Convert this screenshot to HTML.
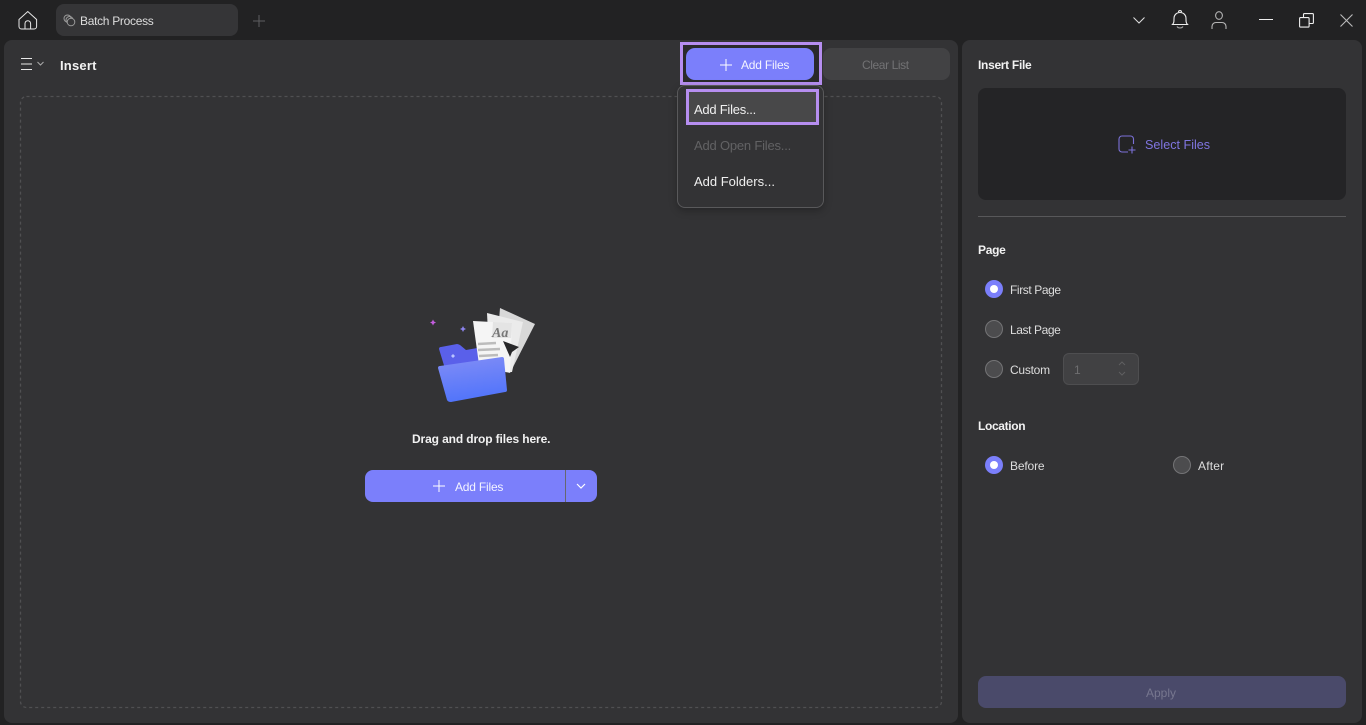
<!DOCTYPE html>
<html>
<head>
<meta charset="utf-8">
<style>
html,body{margin:0;padding:0;width:1366px;height:725px;overflow:hidden;background:#222223;font-family:"Liberation Sans",sans-serif;color:#e8e8e8;font-size:12px}
.a{position:absolute;white-space:nowrap}
.t{position:absolute;white-space:nowrap;line-height:16px}
svg{position:absolute;overflow:visible}
.b{font-weight:bold;color:#f2f2f2}
.radio{position:absolute;width:16px;height:16px;border-radius:50%;background:#4c4c4e;border:1px solid #747476}
.on{position:absolute;width:18px;height:18px;border-radius:50%;background:#7b7ffb}
.on:after{content:"";position:absolute;left:5px;top:5px;width:8px;height:8px;border-radius:50%;background:#fff}
</style>
</head>
<body>
<!-- top bar -->
<svg style="left:17px;top:10px" width="22" height="20" viewBox="0 0 22 20" fill="none" stroke="#e8e8e8" stroke-width="1"><path d="M2 9.500 10.800 1.500 19.600 9.500V16.500a2.500 2.500 0 0 1-2.500 2.500H4.500a2.500 2.500 0 0 1-2.500-2.500Z"/><path d="M8 19V13.500a2.800 2.800 0 0 1 5.600 0V19"/></svg>
<div class="a" style="left:56px;top:4px;width:182px;height:32px;border-radius:8px;background:#353537"></div>
<svg style="left:63px;top:14px" width="14" height="14" viewBox="0 0 14 14" fill="none" stroke="#999" stroke-width="1"><circle cx="4.500" cy="4.500" r="3.500"/><circle cx="6.500" cy="6" r="3.500"/><circle cx="8" cy="8" r="3.800" fill="#353537"/></svg>
<div class="t" style="left:80px;top:13px;color:#ddd;letter-spacing:-.3px">Batch Process</div>
<svg style="left:252px;top:14px" width="14" height="14" stroke="#5e5e60" stroke-width="1"><path d="M7 1V13M1 7H13"/></svg>

<svg style="left:1132px;top:15px" width="14" height="10" fill="none" stroke="#ddd" stroke-width="1"><path d="M1.500 2.500 7 8 12.500 2.500"/></svg>
<svg style="left:1171px;top:9px" width="18" height="21" viewBox="0 0 18 21" fill="none" stroke="#eee" stroke-width="1.100"><path d="M1.500 15.500c1.500-1.500 1.500-3 1.500-6 0-3.500 2.500-6 6-6s6 2.500 6 6c0 3 0 4.500 1.500 6Z"/><path d="M7.500 3.200C7.500 1 10.500 1 10.500 3.200"/><path d="M6 17.500c1.200 2 4.800 2 6 0" stroke="#aaa"/></svg>
<svg style="left:1211px;top:11px" width="16" height="19" viewBox="0 0 16 19" fill="none" stroke="#b4b4b4" stroke-width="1.100"><ellipse cx="8" cy="4.500" rx="3.400" ry="3.800"/><path d="M1 18V15.500C1 13 3 11.500 5 11.500H11C13 11.500 15 13 15 15.500V18"/></svg>
<div class="a" style="left:1259px;top:19px;width:14px;height:1px;background:#eee"></div>
<svg style="left:1299px;top:13px" width="15" height="15" viewBox="0 0 15 15" fill="none" stroke="#eee" stroke-width="1.100"><rect x=".6" y="4.600" width="9.500" height="9.500" rx="1"/><path d="M4.500 4.500V1.600a1 1 0 0 1 1-1H13.400a1 1 0 0 1 1 1V9.500a1 1 0 0 1-1 1H10"/></svg>
<svg style="left:1340px;top:14px" width="13" height="13" stroke="#bbb" stroke-width="1.100"><path d="M.5.500 12.500 12.500M12.500.500 .5 12.500"/></svg>

<!-- left panel -->
<div class="a" style="left:4px;top:40px;width:954px;height:683px;background:#333335;border-radius:8px"></div>
<!-- right panel -->
<div class="a" style="left:962px;top:40px;width:400px;height:683px;background:#333335;border-radius:8px"></div>

<!-- toolbar -->
<svg style="left:20px;top:57px" width="24" height="14" fill="none" stroke="#e8e8e8" stroke-width="1"><path d="M1 1.500H12M1 7H12M1 12.500H12"/><path d="M17.500 5 20.500 8 23.500 5" stroke="#aaa"/></svg>
<div class="t b" style="left:60px;top:57px;font-size:13px;letter-spacing:.2px;top:58px">Insert</div>

<!-- drop zone -->
<svg style="left:20px;top:96px" width="922" height="612" fill="none"><rect x=".5" y=".5" width="921" height="611" rx="6" stroke="#505052" stroke-width="1.300" stroke-dasharray="3 3"/></svg>

<!-- Add files top -->
<div class="a" style="left:680px;top:42px;width:136px;height:37px;border:3px solid #b68ef0;background:#2a2a2c"></div>
<div class="a" style="left:686px;top:48px;width:128px;height:32px;border-radius:9px;background:#7b7ffb"></div>
<svg style="left:720px;top:59px" width="12" height="12" stroke="#fff" stroke-width="1"><path d="M6 0V12M0 6H12"/></svg>
<div class="t" style="left:741px;top:57px;color:#f4f4ff;letter-spacing:-.2px">Add Files</div>
<div class="a" style="left:823px;top:48px;width:127px;height:32px;border-radius:8px;background:#424244"></div>
<div class="t" style="left:862px;top:57px;color:#727274;letter-spacing:-.4px">Clear List</div>

<!-- dropdown -->
<div class="a" style="left:677px;top:85px;width:145px;height:121px;border:1px solid #59595b;border-radius:8px;background:#333335;box-shadow:0 3px 8px rgba(0,0,0,.25)"></div>
<div class="a" style="left:686px;top:89px;width:127px;height:30px;border:3px solid #b68ef0;background:#484849"></div>
<div class="t" style="left:694px;top:102px;font-size:13px;color:#f0f0f0;letter-spacing:-.25px">Add Files...</div>
<div class="t" style="left:694px;top:138px;font-size:13px;color:#626264;letter-spacing:-.2px">Add Open Files...</div>
<div class="t" style="left:694px;top:174px;font-size:13px;color:#f0f0f0">Add Folders...</div>

<!-- illustration -->
<svg style="left:420px;top:300px" width="125" height="110" viewBox="0 0 125 110">
<defs>
<linearGradient id="f" x1="0.300" y1="0" x2=".5" y2="1"><stop offset="0" stop-color="#7f8cf6"/><stop offset="1" stop-color="#4f73fb"/></linearGradient>
</defs>
<path d="M13 19.500 14 21.500 16 22.500 14 23.500 13 25.500 12 23.500 10 22.500 12 21.500Z" fill="#c55de0"/>
<path d="M43 26 44 28 46 29 44 30 43 32 42 30 40 29 42 28Z" fill="#8c83ee"/>
<path d="M19 49Q19 47 21 47L37 44Q38 44 40 45L46 50 63 47 66 75 30 85Z" fill="#5a60ea"/>
<path d="M33 54 35 56 33 58 31 56Z" fill="#b9c4ff"/>
<path d="M80 8 115 24 90 73 75 70Z" fill="#d8d8d8"/>
<path d="M67 13 103 22 92 72 70 72Z" fill="#ebebeb"/>
<path d="M53 21 92 23 90 72 60 72Z" fill="#f5f5f5"/>
<path d="M73 22 92 23 91 38 72 38Z" fill="#e4e4e4"/>
<text x="72" y="37" font-family="Liberation Serif" font-style="italic" font-weight="bold" font-size="14" fill="#777">Aa</text>
<path d="M58 44 76 43M58 50 80 49M59 56 78 55" stroke="#bcbcbc" stroke-width="2.500"/>
<path d="M83 41 99 47 92 52 90 57Z" fill="#28282a"/>
<path d="M18 68Q18 66 20 66L82 57Q84 57 84 59L87 90Q87 92 85 92L31 102Q28 102 27 100Z" fill="url(#f)"/>
</svg>

<div class="t b" style="left:412px;top:431px;letter-spacing:-.12px">Drag and drop files here.</div>

<!-- Add files main -->
<div class="a" style="left:365px;top:470px;width:232px;height:32px;border-radius:8px;background:#7b7ffb"></div>
<div class="a" style="left:565px;top:470px;width:1px;height:32px;background:#66676f"></div>
<svg style="left:433px;top:480px" width="12" height="12" stroke="#fff" stroke-width="1"><path d="M6 0V12M0 6H12"/></svg>
<div class="t" style="left:455px;top:479px;color:#f4f4ff;letter-spacing:-.2px">Add Files</div>
<svg style="left:576px;top:483px" width="10" height="7" fill="none" stroke="#fff" stroke-width="1.200"><path d="M1 1 5 5 9 1"/></svg>

<!-- right panel content -->
<div class="t b" style="left:978px;top:57px;letter-spacing:-.3px">Insert File</div>
<div class="a" style="left:978px;top:88px;width:368px;height:112px;border-radius:8px;background:#242426"></div>
<svg style="left:1118px;top:135px" width="19" height="19" viewBox="0 0 19 19" fill="none" stroke="#7b71d8" stroke-width="1.100"><path d="M15.500 9V4a3 3 0 0 0-3-3H4a3 3 0 0 0-3 3V14a3 3 0 0 0 3 3H10"/><path d="M14 11.500V18.500M10.500 15H17.500"/></svg>
<div class="t" style="left:1145px;top:137px;color:#7f75e0;font-size:12.600px">Select Files</div>
<div class="a" style="left:978px;top:216px;width:368px;height:1px;background:#58585a"></div>

<div class="t b" style="left:978px;top:242px;letter-spacing:-.3px">Page</div>
<div class="on" style="left:985px;top:280px"></div>
<div class="t" style="left:1010px;top:282px;color:#ddd;letter-spacing:-.4px">First Page</div>
<div class="radio" style="left:985px;top:320px"></div>
<div class="t" style="left:1010px;top:322px;color:#ddd;letter-spacing:-.4px">Last Page</div>
<div class="radio" style="left:985px;top:360px"></div>
<div class="t" style="left:1010px;top:362px;color:#ddd;letter-spacing:-.25px">Custom</div>
<div class="a" style="left:1063px;top:353px;width:74px;height:30px;border:1px solid #4e4e50;border-radius:6px;background:#414143"></div>
<div class="t" style="left:1074px;top:362px;color:#6e6e70">1</div>
<svg style="left:1117px;top:360px" width="10" height="17" fill="none" stroke="#5f5f61" stroke-width="1"><path d="M2 5 5 2 8 5M2 12 5 15 8 12"/></svg>

<div class="t b" style="left:978px;top:418px;letter-spacing:-.35px">Location</div>
<div class="on" style="left:985px;top:456px"></div>
<div class="t" style="left:1010px;top:458px;color:#ddd;letter-spacing:-.15px">Before</div>
<div class="radio" style="left:1173px;top:456px"></div>
<div class="t" style="left:1198px;top:458px;color:#ddd;letter-spacing:.2px">After</div>

<div class="a" style="left:978px;top:676px;width:368px;height:32px;border-radius:8px;background:#4a4a6a"></div>
<div class="t" style="left:1146px;top:685px;color:#77778f">Apply</div>
</body>
</html>
